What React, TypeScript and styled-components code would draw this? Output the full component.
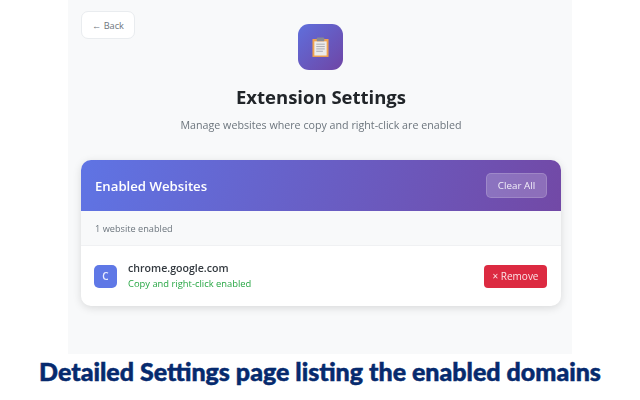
import React from "react";
import styled, { createGlobalStyle } from "styled-components";

const Global = createGlobalStyle`
  html, body { margin: 0; padding: 0; background: #fff; }
  body { font-family: "Open Sans", "Noto Sans", "Liberation Sans", sans-serif; }
  * { box-sizing: border-box; }
`;
const Page = styled.div`
  width: 640px; height: 400px; overflow: hidden; background: #fff;
  display: flex; flex-direction: column; align-items: center;
`;
const Panel = styled.main`
  width: 504px; height: 354px; flex: none; background: #f8f9fa;
  padding: 11px 11px 0 13px; display: flex; flex-direction: column;
  filter: blur(0.5px);
`;
const BackButton = styled.button`
  align-self: flex-start; width: 54px; height: 28px; padding: 0;
  background: #fff; border: 1px solid #e9ecef; border-radius: 7px;
  color: #6c757d; font: 400 9.2px "Open Sans", sans-serif;
`;
const Hero = styled.header`
  display: flex; flex-direction: column; align-items: center; margin-top: -15px;
`;
const AppIcon = styled.div`
  width: 45px; height: 46px; border-radius: 11px; margin-right: 2px;
  background: linear-gradient(135deg, #5f6fdc 0%, #6f45a5 100%);
  display: flex; align-items: center; justify-content: center;
`;
const Title = styled.h1`
  margin: 15px 0 0; font: 700 18.5px/24px "Open Sans", sans-serif; color: #212529;
`;
const Subtitle = styled.p`
  margin: 8px 0 0; font: 400 10.7px/16px "Open Sans", sans-serif; color: #6c757d;
`;
const Card = styled.section`
  margin-top: 27px; width: 480px; height: 146px; background: #fff;
  border-radius: 10px; overflow: hidden;
  box-shadow: 0 2px 8px rgba(0,0,0,.13);
`;
const CardHeader = styled.div`
  height: 51px; padding: 0 14px; display: flex; align-items: center; justify-content: space-between;
  background: linear-gradient(105deg, #5f74e4 0%, #7249a6 100%); color: #fff;
`;
const CardTitle = styled.h2`
  margin: 0; font: 600 13.2px "Open Sans", sans-serif; color: #fff;
`;
const ClearButton = styled.button`
  width: 61px; height: 25px; padding: 0; margin-top: -1px;
  background: rgba(255,255,255,.2); border: 1px solid rgba(255,255,255,.16); border-radius: 5px;
  color: #f1eef8; font: 400 9.8px "Open Sans", sans-serif;
`;
const Stats = styled.div`
  height: 35px; padding: 0 14px; display: flex; align-items: center;
  background: #f8f9fa; border-bottom: 1px solid #f0f1f3;
  font: 400 9.2px "Open Sans", sans-serif; color: #6c757d;
`;
const Row = styled.div`
  height: 60px; padding: 0 14px 0 13px; display: flex; align-items: center; gap: 11px;
`;
const Favicon = styled.div`
  width: 23px; height: 23px; border-radius: 5px; background: #5f78e6; color: #e8ecff;
  display: flex; align-items: center; justify-content: center;
  font: 600 10px "Open Sans", sans-serif;
`;
const Info = styled.div`
  flex: 1; display: flex; flex-direction: column; gap: 3px; margin-top: -1px;
`;
const Domain = styled.div`
  font: 600 10.6px/14px "Open Sans", sans-serif; color: #343a40;
`;
const Status = styled.div`
  font: 400 9.4px/12px "Open Sans", sans-serif; color: #28a745;
`;
const RemoveButton = styled.button`
  width: 63px; height: 23px; padding: 0; border: 0; border-radius: 4px;
  background: #dc2a41; color: #fbe4e7; font: 400 10px "Open Sans", sans-serif;
`;
const Caption = styled.div`
  margin-top: 2px; color: #062a6e; white-space: nowrap;
  font: 900 25px/30px Lato, "Liberation Sans", sans-serif; -webkit-text-stroke: 0.5px #062a6e;
`;

const ClipboardIcon = () => (
  <svg width="17" height="21" viewBox="0 0 18 21" aria-hidden="true">
    <rect x="0.5" y="1.5" width="17" height="19" fill="#f0a24e" />
    <rect x="2.5" y="4" width="13" height="15" fill="#ecebeb" />
    <rect x="5" y="0" width="8" height="4" rx="1" fill="#8a8a92" />
    <path d="M4.5 7h9M4.5 9.5h9M4.5 12h9M4.5 14.5h7" stroke="#a8a8ae" strokeWidth="1" fill="none" />
  </svg>
);

export default function App() {
  return (
    <Page>
      <Global />
      <Panel>
        <BackButton>← Back</BackButton>
        <Hero>
          <AppIcon><ClipboardIcon /></AppIcon>
          <Title>Extension Settings</Title>
          <Subtitle>Manage websites where copy and right-click are enabled</Subtitle>
        </Hero>
        <Card>
          <CardHeader>
            <CardTitle>Enabled Websites</CardTitle>
            <ClearButton>Clear All</ClearButton>
          </CardHeader>
          <Stats>1 website enabled</Stats>
          <Row>
            <Favicon>C</Favicon>
            <Info>
              <Domain>chrome.google.com</Domain>
              <Status>Copy and right-click enabled</Status>
            </Info>
            <RemoveButton>× Remove</RemoveButton>
          </Row>
        </Card>
      </Panel>
      <Caption>Detailed Settings page listing the enabled domains</Caption>
    </Page>
  );
}
